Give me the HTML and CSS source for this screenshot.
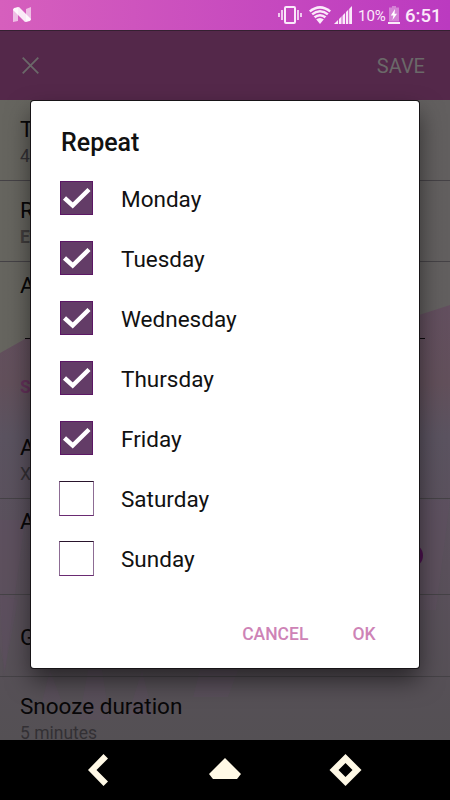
FILE: index.html
```html
<!DOCTYPE html>
<html lang="en">
<head>
<meta charset="utf-8">
<title>Alarm settings</title>
<link rel="stylesheet" href="styles.css">
</head>
<body>
<div class="phone">
  <header class="status">
    <svg class="brand" width="19" height="16" viewBox="0 0 19 16"><path d="M0 2l5-2v14l-5 1zM13 2l5-2v13l-5 2z" fill="#fff" opacity=".6"/><path d="M1 1l5-1 12 12-1 2-5 1L0 3z" fill="#fff" opacity=".88"/></svg>
    <div class="status-icons">
      <svg class="vibrate" width="24" height="20" viewBox="0 0 24 20" fill="none" stroke="#faeafa"><rect x="7" y="2" width="10" height="16" rx="1" stroke-width="2"/><path d="M4 5v10M20 5v10M1 8v4M23 8v4" stroke-width="1.6"/></svg>
      <svg class="wifi" width="22" height="19" viewBox="0 0 22 19" fill="#faeafa"><path d="M0 4.5Q11-4.500 22 4.500L11 18z"/><g fill="none" stroke="#c442bd" stroke-width="1.300"><path d="M1.500 7.200Q11-.4 20.500 7.200M4 10Q11 4.500 18 10M6.500 13Q11 9.500 15.500 13"/></g></svg>
      <svg class="signal" width="18" height="18" viewBox="0 0 18 18"><path d="M0 18L18 0v18z" fill="#faeafa"/><path d="M4.500 12v6M8 8v10M11.500 4v14M14.700 2v16" stroke="#c442bd" stroke-width=".9"/></svg>
      <span class="percent">10%</span>
      <svg class="battery" width="12" height="18" viewBox="0 0 12 18"><path d="M1 1.500h3V0h4v1.500h3v14H1z" fill="#fff" opacity=".35"/><path d="M7 3L2.800 9.500h2.600L4.500 14 9 7.700H6.500z" fill="#fff"/><path d="M0 16h12v2H0z" fill="#faeafa"/></svg>
      <span class="clock">6:51</span>
    </div>
  </header>
  <nav class="toolbar">
    <svg width="17" height="17" viewBox="0 0 17 17"><path d="M.7.7l15.600 15.600M16.300.7L.7 16.300" stroke="#6b6869" stroke-width="1.800"/></svg>
    <span>SAVE</span>
  </nav>
  <main class="settings">
    <svg class="scenery" width="450" height="640" viewBox="0 0 450 640">
      <defs>
        <linearGradient id="hill" x1="0" y1="0" x2="0" y2="1"><stop offset="0" stop-color="#634f5f"/><stop offset=".18" stop-color="#62505b"/><stop offset=".3" stop-color="#5b5360"/><stop offset=".6" stop-color="#5a505b"/><stop offset="1" stop-color="#545054"/></linearGradient>
      </defs>
      <path d="M0 253L25 239 32 237 419 215 450 205V640H0z" fill="url(#hill)"/>
      <path d="M25 420L5 570-10 500V420zM450 400l-14 110h-35V400z" fill="#68506a" opacity=".2"/>
      <path d="M0 495l4 80 14-75zM50 570l-8 32h20zM88 570l-9 50h31l-8-50zM142 570l-14 45h25zM200 570l-7 27h35l10-27z" fill="#5e4e61" opacity=".35"/>
    </svg>
    <section class="row"><h2>Time</h2><p>4:30</p></section>
    <section class="row"><h2>Repeat</h2><p class="strong">Every weekday</p></section>
    <section class="row alarm"><h2>Alarm name</h2><hr><h3>Sound</h3><h2>Alarm tone</h2><p>Xylophone</p></section>
    <section class="row volume"><h2>Alarm volume</h2><i class="thumb"></i></section>
    <section class="row gradual"><h2>Gradually increase</h2></section>
    <section class="row snooze"><h2>Snooze duration</h2><p>5 minutes</p></section>
  </main>
  <footer class="navigation">
    <svg width="450" height="60" viewBox="0 0 450 60" fill="#fff9e6"><path d="M88 30l15.500-16 4.500 4.500L96.500 30 108 41.500l-4.500 4.500z"/><path d="M225 18l16 16-4 5h-24l-4-5z"/><path fill-rule="evenodd" d="M345.500 14l16 16-16 16-16-16zm0 9l-7 7 7 7 7-7z"/></svg>
  </footer>
  <div class="dialog" role="dialog">
    <h1>Repeat</h1>
    <div class="days">
      <label><span class="box on"><svg viewBox="0 0 31 32"><path d="M3.500 16l8.200 7.500L28 7.500"/></svg></span>Monday</label>
      <label><span class="box on"><svg viewBox="0 0 31 32"><path d="M3.500 16l8.200 7.500L28 7.500"/></svg></span>Tuesday</label>
      <label><span class="box on"><svg viewBox="0 0 31 32"><path d="M3.500 16l8.200 7.500L28 7.500"/></svg></span>Wednesday</label>
      <label><span class="box on"><svg viewBox="0 0 31 32"><path d="M3.500 16l8.200 7.500L28 7.500"/></svg></span>Thursday</label>
      <label><span class="box on"><svg viewBox="0 0 31 32"><path d="M3.500 16l8.200 7.500L28 7.500"/></svg></span>Friday</label>
      <label><span class="box"></span>Saturday</label>
      <label><span class="box"></span>Sunday</label>
    </div>
    <div class="actions"><span>CANCEL</span><span>OK</span></div>
  </div>
</div>
</body>
</html>
```

FILE: styles.css
```css
* { box-sizing: border-box; }
body { margin: 0; font-family: Roboto, sans-serif; }
h1, h2, h3, p { margin: 0; font-weight: 400; }
svg { display: block; flex: none; }
.phone { position: relative; width: 450px; height: 800px; overflow: hidden; display: flex; flex-direction: column; background: #666; }
.status { height: 30px; flex: none; display: flex; justify-content: space-between; padding: 0 10px 0 13px; background: linear-gradient(90deg, #d65fbd, #bb3ac0); color: #fbeafa; }
.brand { margin-top: 7px; }
.status-icons { display: flex; align-items: flex-start; }
.vibrate { margin: 5px 7px 0 0; }
.wifi { margin: 6px 3px 0 0; }
.signal { margin: 6px 6px 0 0; }
.percent { font-size: 15px; line-height: 32px; width: 28px; }
.battery { margin: 6px 5px 0 2px; }
.clock { width: 35px; font-size: 18.500px; line-height: 32px; font-weight: 500; }
.toolbar { height: 70px; flex: none; display: flex; align-items: center; justify-content: space-between; padding: 0 25px 0 22px; background: #54284a; border-top: 1px solid #342031; color: #6b6869; font-size: 20px; }
.settings { height: 640px; flex: none; position: relative; overflow: hidden; background: linear-gradient(90deg, #66655f, #625f5f); color: #080708; }
.scenery { position: absolute; left: 0; top: 0; }
.row { position: relative; height: 81px; padding: 15px 20px 0; border-bottom: 1px solid #454246; white-space: nowrap; }
h2 { font-size: 22.500px; line-height: 29px; }
.row p { font-size: 17.500px; line-height: 24px; color: #333034; }
.row .strong { font-weight: 700; color: #403d3d; }
.alarm { height: 237px; padding-top: 9px; }
.alarm hr { height: 1px; border: 0; background: #0b080b; margin: 38px 5px 36px; }
h3 { font-size: 17.500px; line-height: 25px; font-weight: 700; color: #65325b; margin-bottom: 33px; }
.volume { height: 96px; padding-top: 8px; }
.thumb { display: block; width: 25px; height: 25px; border-radius: 50%; background: #4d124f; margin: 7px 7px 0 auto; }
.gradual { height: 82px; padding-top: 28px; }
.snooze { border: 0; }
.snooze p { line-height: 25px; }
.navigation { height: 60px; flex: none; background: #000; }
.dialog { position: absolute; left: 31px; top: 101px; width: 388px; height: 567px; border-radius: 3px; background: #fff; box-shadow: 0 0 0 1px #171417, 0 12px 25px #0008; color: #111; }
.dialog h1 { padding: 25px 30px 0; font-size: 25px; line-height: 33px; font-weight: 500; }
.days { margin-top: 9px; padding-left: 28px; }
.days label { display: flex; align-items: center; gap: 27px; height: 60px; padding-top: 1px; font-size: 22.500px; }
.box { width: 35px; height: 35px; margin-top: -1px; flex: none; border: 1px solid #8d6c94; border-top-color: #29142c; border-bottom-color: #6a2b72; }
.box.on { width: 33px; height: 34px; margin: -2px 1px 0; border: 1px solid #5c1765; background: #633c67; }
.box svg { width: 31px; height: 32px; fill: none; stroke: #fff; stroke-width: 4.500; }
.actions { display: flex; justify-content: flex-end; gap: 44px; padding: 34px 43.500px 0 0; font-size: 17.500px; line-height: 24px; font-weight: 500; color: #ce83b6; }
```
